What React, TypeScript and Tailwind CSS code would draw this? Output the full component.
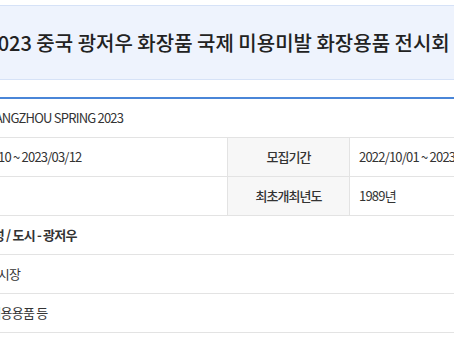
const font = { fontFamily: '"Noto Sans CJK KR", "Noto Sans", sans-serif' }

type Row =
  | { kind: "full"; value: string; strong?: boolean }
  | { kind: "pair"; label1: string; left: string; label2: string; right: string }

const rows: Row[] = [
  { kind: "full", value: "CIBE GUANGZHOU SPRING 2023" },
  { kind: "pair", label1: "개최기간", left: "2023/03/10 ~ 2023/03/12", label2: "모집기간", right: "2022/10/01 ~ 2023/02/28" },
  { kind: "pair", label1: "개최주기", left: "", label2: "최초개최년도", right: "1989년" },
  { kind: "full", value: "성 - 광동성 / 도시 - 광저우", strong: true },
  { kind: "full", value: "파저우 전시장" },
  { kind: "full", value: "화장품, 미용용품 등" },
]

function Label({ children }: { children: React.ReactNode }) {
  return (
    <div className="w-[123px] shrink-0 flex items-center justify-center bg-[#f7f7f7] border-x border-[#e3e3e3] text-[#333] font-medium tracking-[-1px]">
      {children}
    </div>
  )
}

export default function App() {
  return (
    <div className="w-[454px] h-[341px] overflow-hidden bg-white" style={font}>
      <div className="w-[796px] -ml-[180px] pt-[5px]">
        <div className="h-[75px] flex items-center justify-center bg-[#eef3fd] border border-[#d6e2f7]">
          <h1 className="text-[20px] font-medium text-[#222] whitespace-nowrap">
            2023 중국 광저우 화장품 국제 미용미발 화장용품 전시회
          </h1>
        </div>

        <div className="mt-[17px] border-t-2 border-[#4a86d8] text-[13px] text-[#333] tracking-[-0.8px]">
          {rows.map((row, i) => (
            <div key={i} className="h-[39px] flex border-b border-[#e3e3e3]">
              {row.kind === "full" ? (
                <div className="flex-1 flex items-center pl-[131px] whitespace-nowrap">
                  <span className={row.strong ? "font-semibold" : ""}>{row.value}</span>
                </div>
              ) : (
                <>
                  <Label>{row.label1}</Label>
                  <div className="w-[284px] shrink-0 flex items-center px-[8px] whitespace-nowrap">
                    {row.left}
                  </div>
                  <Label>{row.label2}</Label>
                  <div className="flex-1 flex items-center px-[9px] whitespace-nowrap">{row.right}</div>
                </>
              )}
            </div>
          ))}
        </div>
      </div>
    </div>
  )
}
